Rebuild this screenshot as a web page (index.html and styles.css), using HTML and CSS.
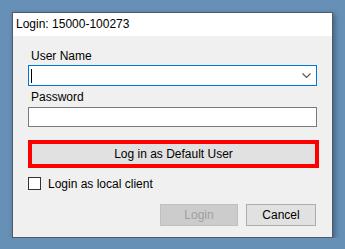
FILE: index.html
```html
<!DOCTYPE html>
<html>
<head>
    <title>Login</title>
    <link rel="stylesheet" href="styles.css">
</head>
<body>
    <div class="dialog">
        <div class="titlebar">Login: 15000-100273</div>

        <div class="content">
            <div class="label first">User Name</div>
            <div class="combo">
                <span class="caret"></span>
                <svg class="chevron" width="9" height="6" viewBox="0 0 9 6">
                    <polyline points="0.5,0.5 4.5,4.5 8.5,0.5" fill="none" stroke="#5a5a5a" stroke-width="1.2"/>
                </svg>
            </div>

            <div class="label">Password</div>
            <div class="textbox"></div>

            <div class="default-btn">Log in as Default User</div>

            <label class="check-row">
                <span class="checkbox"></span>
                <span>Login as local client</span>
            </label>

            <div class="actions">
                <div class="btn disabled">Login</div>
                <div class="btn">Cancel</div>
            </div>
        </div>
    </div>
</body>
</html>
```

FILE: styles.css
```css
:root {
    --desk: #6690b5;
    --face: #f0f0f0;
    --focus: #0078d7;
}
body {
    margin: 0;
    padding: 12px 0 0 12px;
    background: var(--desk);
    font-family: 'Liberation Sans', Arial, sans-serif;
    font-size: 12px;
    color: #000;
}
.dialog {
    width: 321px;
    height: 226px;
    box-sizing: border-box;
    border: 1px solid #4e5a66;
    background: var(--face);
    box-shadow: 2px 2px 5px rgba(20, 40, 60, 0.45);
}
.titlebar {
    height: 23px;
    line-height: 23px;
    padding-left: 3px;
    background: #fff;
}
.content {
    padding: 0 15px;
}
.label {
    margin-top: 4px;
    padding-left: 3px;
    line-height: 15px;
}
.label.first {
    margin-top: 13px;
}
.combo {
    margin-top: 1px;
    height: 21px;
    box-sizing: border-box;
    border: 1px solid var(--focus);
    background: #fff;
    display: flex;
    align-items: center;
    justify-content: space-between;
    padding: 0 5px 0 2px;
}
.caret {
    width: 1px;
    height: 14px;
    background: #000;
}
.chevron {
    display: block;
}
.textbox {
    margin-top: 2px;
    height: 20px;
    box-sizing: border-box;
    border: 1px solid #7a7a7a;
    background: #fff;
}
.default-btn {
    margin-top: 13px;
    width: 291px;
    height: 28px;
    box-sizing: border-box;
    border: 4px solid #ff0000;
    background: #e1e1e1;
    text-align: center;
    line-height: 20px;
}
.check-row {
    margin-top: 9px;
    display: flex;
    align-items: center;
    gap: 7px;
    height: 13px;
}
.checkbox {
    width: 13px;
    height: 13px;
    box-sizing: border-box;
    border: 1px solid #333;
    background: #fff;
}
.actions {
    margin-top: 14px;
    display: flex;
    justify-content: flex-end;
    gap: 8px;
    padding-right: 1px;
}
.btn {
    width: 70px;
    height: 22px;
    box-sizing: border-box;
    border: 1px solid #adadad;
    background: #e1e1e1;
    text-align: center;
    line-height: 20px;
}
.btn.disabled {
    width: 78px;
    background: #cccccc;
    border-color: #bfbfbf;
    color: #a0a0a0;
}
```
